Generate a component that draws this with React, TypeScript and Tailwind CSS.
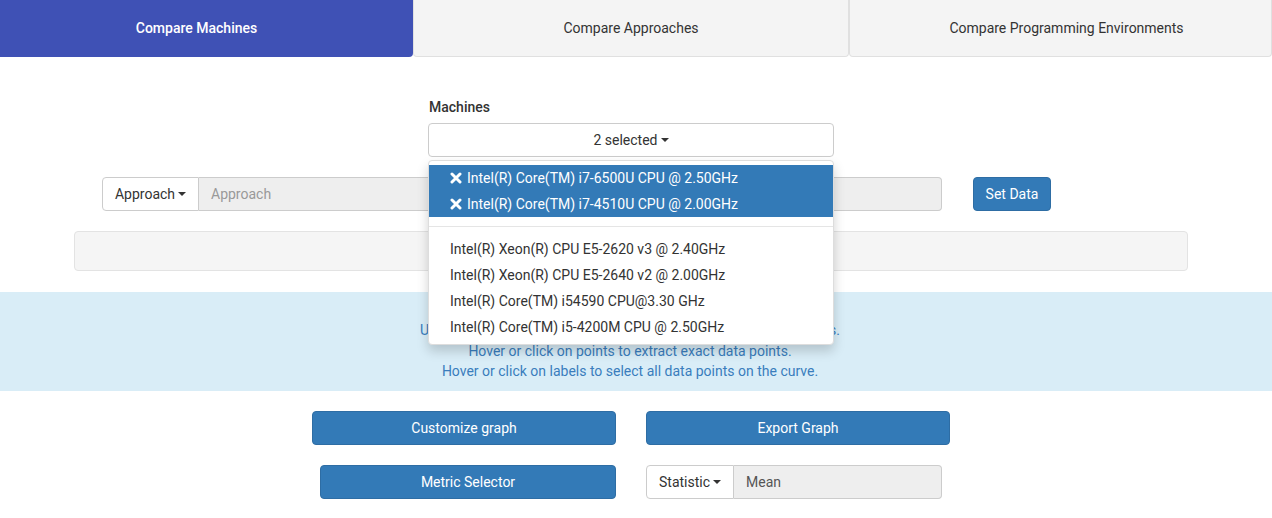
import React from 'react';

const selectedMachines = [
  'Intel(R) Core(TM) i7-6500U CPU @ 2.50GHz',
  'Intel(R) Core(TM) i7-4510U CPU @ 2.00GHz',
];

const otherMachines = [
  'Intel(R) Xeon(R) CPU E5-2620 v3 @ 2.40GHz',
  'Intel(R) Xeon(R) CPU E5-2640 v2 @ 2.00GHz',
  'Intel(R) Core(TM) i54590 CPU@3.30 GHz',
  'Intel(R) Core(TM) i5-4200M CPU @ 2.50GHz',
];

const Caret = () => (
  <span className="ml-[3px] inline-block h-0 w-0 border-x-[4px] border-t-[4px] border-x-transparent border-t-[#333] align-middle" />
);

const RemoveIcon = () => (
  <svg width="12" height="12" viewBox="0 0 12 12" className="mr-[5px] inline-block">
    <path d="M2 2 L10 10 M10 2 L2 10" stroke="white" strokeWidth="3" strokeLinecap="round" />
  </svg>
);

const App: React.FC = () => {
  const tabs = [
    { label: 'Compare Machines', width: 'w-[413px] pr-[20px]', active: true },
    { label: 'Compare Approaches', width: 'w-[436px]', active: false },
    { label: 'Compare Programming Environments', width: 'flex-1 pl-[12px]', active: false },
  ];

  return (
    <div className="relative min-h-[518px] bg-white text-[14px] text-[#333]" style={{ fontFamily: 'Roboto, "Liberation Sans", sans-serif' }}>
      {/* tabs */}
      <div className="flex h-[57px]">
        {tabs.map((tab) => (
          <div
            key={tab.label}
            className={
              tab.active
                ? `${tab.width} flex items-center justify-center rounded-br-[4px] bg-[#3f51b5] font-medium text-white`
                : `${tab.width} flex items-center justify-center rounded-b-[4px] border border-t-0 border-[#e0e0e0] bg-[#f4f4f4] text-[#333]`
            }
          >
            {tab.label}
          </div>
        ))}
      </div>

      {/* machines select */}
      <div className="ml-[428px] mt-[40px] w-[406px]">
        <div className="mb-[6px] pl-[1px] font-medium leading-[20px]">Machines</div>
        <div className="flex h-[34px] items-center justify-center rounded-[4px] border border-[#ccc] bg-white">
          2 selected <Caret />
        </div>
      </div>

      {/* approach row */}
      <div className="ml-[102px] mt-[20px] flex items-center">
        <div className="flex h-[34px] w-[840px]">
          <div className="flex w-[97px] items-center justify-center rounded-l-[4px] border border-[#ccc] bg-white">
            Approach <Caret />
          </div>
          <div className="flex flex-1 items-center rounded-r-[4px] border border-l-0 border-[#ccc] bg-[#eee] px-[12px] text-[#999]">
            Approach
          </div>
        </div>
        <div className="ml-[31px] flex h-[34px] w-[78px] items-center justify-center rounded-[4px] border border-[#2e6da4] bg-[#337ab7] text-white">
          Set Data
        </div>
      </div>

      {/* well */}
      <div className="ml-[74px] mt-[20px] h-[40px] w-[1114px] rounded-[4px] border border-[#e3e3e3] bg-[#f5f5f5]" />

      {/* info */}
      <div className="mt-[21px] flex h-[99px] flex-col items-center bg-[#d9edf7] pr-[12px] pt-[28px] leading-[20.5px] text-[#3a7dbd]">
        <div>Use the mouse wheel to zoom and click and drag to pan the graphs.</div>
        <div>Hover or click on points to extract exact data points.</div>
        <div>Hover or click on labels to select all data points on the curve.</div>
      </div>

      {/* buttons */}
      <div className="mt-[20px] flex">
        <div className="ml-[312px] flex h-[34px] w-[304px] items-center justify-center rounded-[4px] border border-[#2e6da4] bg-[#337ab7] text-white">
          Customize graph
        </div>
        <div className="ml-[30px] flex h-[34px] w-[304px] items-center justify-center rounded-[4px] border border-[#2e6da4] bg-[#337ab7] text-white">
          Export Graph
        </div>
      </div>
      <div className="mt-[20px] flex">
        <div className="ml-[320px] flex h-[34px] w-[296px] items-center justify-center rounded-[4px] border border-[#2e6da4] bg-[#337ab7] text-white">
          Metric Selector
        </div>
        <div className="ml-[30px] flex h-[34px] w-[296px]">
          <div className="flex w-[88px] items-center justify-center rounded-l-[4px] border border-[#ccc] bg-white">
            Statistic <Caret />
          </div>
          <div className="flex flex-1 items-center rounded-r-[4px] border border-l-0 border-[#ccc] bg-[#eee] px-[12px] text-[#555]">
            Mean
          </div>
        </div>
      </div>

      {/* open dropdown menu */}
      <div className="absolute left-[428px] top-[160px] w-[406px] rounded-[4px] border border-[#ddd] bg-white py-[4px] shadow-[0_6px_12px_rgba(0,0,0,0.175)]">
        {selectedMachines.map((m) => (
          <div key={m} className="flex h-[26px] items-center bg-[#337ab7] pl-[21px] text-white">
            <RemoveIcon />
            {m}
          </div>
        ))}
        <div className="my-[9px] h-px bg-[#e5e5e5]" />
        {otherMachines.map((m) => (
          <div key={m} className="flex h-[26px] items-center pl-[21px] text-[#333]">
            {m}
          </div>
        ))}
      </div>
    </div>
  );
};

export default App;
